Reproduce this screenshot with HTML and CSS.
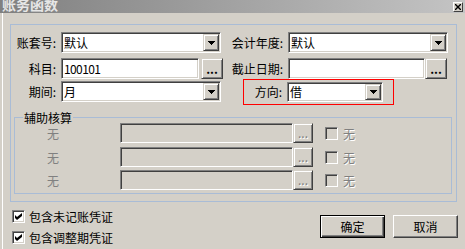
FILE: index.html
```html
<!DOCTYPE html>
<html lang="zh-CN">
<head>
    <meta charset="UTF-8">
    <title>账务函数</title>
    <link rel="stylesheet" href="styles.css">
</head>
<body>
    <div class="titlebar">
        <span class="title">账务函数</span>
        <span class="close">
            <svg width="6" height="6" viewBox="0 0 6 6"><path d="M0 0L6 6M6 0L0 6" stroke="#000" stroke-width="1.4"/></svg>
        </span>
    </div>
    <div class="main">
        <div class="frame">
            <div class="row">
                <label class="lbl">账套号:</label>
                <div class="cell">
                    <div class="combo sunken w160">
                        <span class="val">默认</span>
                        <span class="drop raised"><svg width="7" height="4" viewBox="0 0 7 4"><path d="M0 0h7v1h-1v1h-1v1h-1v1h-1v-1h-1v-1h-1v-1h-1z"/></svg></span>
                    </div>
                </div>
                <label class="lbl lbl-r">会计年度:</label>
                <div class="combo sunken w160">
                    <span class="val">默认</span>
                    <span class="drop raised"><svg width="7" height="4" viewBox="0 0 7 4"><path d="M0 0h7v1h-1v1h-1v1h-1v1h-1v-1h-1v-1h-1v-1h-1z"/></svg></span>
                </div>
            </div>
            <div class="row r2">
                <label class="lbl">科目:</label>
                <div class="cell">
                    <div class="field sunken w138"><span class="val num">100101</span></div>
                    <button class="dots raised gap">...</button>
                </div>
                <label class="lbl lbl-r">截止日期:</label>
                <div class="field sunken w137"></div>
                <button class="dots raised">...</button>
            </div>
            <div class="row r3">
                <label class="lbl">期间:</label>
                <div class="cell">
                    <div class="combo sunken w160">
                        <span class="val">月</span>
                        <span class="drop raised"><svg width="7" height="4" viewBox="0 0 7 4"><path d="M0 0h7v1h-1v1h-1v1h-1v1h-1v-1h-1v-1h-1v-1h-1z"/></svg></span>
                    </div>
                </div>
                <div class="dirbox">
                    <label class="lbl lbl-dir">方向:</label>
                    <div class="combo sunken w96 h20">
                        <span class="val">借</span>
                        <span class="drop raised"><svg width="7" height="4" viewBox="0 0 7 4"><path d="M0 0h7v1h-1v1h-1v1h-1v1h-1v-1h-1v-1h-1v-1h-1z"/></svg></span>
                    </div>
                </div>
            </div>

            <div class="group">
                <div class="group-title">辅助核算</div>
                <div class="grow">
                    <span class="glbl">无</span>
                    <div class="gfield sunken"></div>
                    <button class="gdots raised" disabled>...</button>
                    <span class="chk sunken off"></span>
                    <span class="gtext">无</span>
                </div>
                <div class="grow g2">
                    <span class="glbl">无</span>
                    <div class="gfield sunken"></div>
                    <button class="gdots raised" disabled>...</button>
                    <span class="chk sunken off"></span>
                    <span class="gtext">无</span>
                </div>
                <div class="grow g3">
                    <span class="glbl">无</span>
                    <div class="gfield sunken"></div>
                    <button class="gdots raised" disabled>...</button>
                    <span class="chk sunken off"></span>
                    <span class="gtext">无</span>
                </div>
            </div>
        </div>

        <div class="bottom">
            <div class="checks">
                <div class="chk-row">
                    <span class="chk sunken"><svg width="7" height="7" viewBox="0 0 7 7"><path d="M0 2l2 2 5-4v3l-5 4-2-2z"/></svg></span>
                    <span>包含未记账凭证</span>
                </div>
                <div class="chk-row c2">
                    <span class="chk sunken"><svg width="7" height="7" viewBox="0 0 7 7"><path d="M0 2l2 2 5-4v3l-5 4-2-2z"/></svg></span>
                    <span>包含调整期凭证</span>
                </div>
            </div>
            <div class="buttons">
                <button class="btn default">确定</button>
                <button class="btn">取消</button>
            </div>
        </div>
    </div>
</body>
</html>
```

FILE: styles.css
```css
* {
    box-sizing: border-box;
}
body {
    margin: 0;
    width: 465px;
    height: 249px;
    overflow: hidden;
    background: #d4d0c8;
    font-family: "Noto Sans CJK SC", sans-serif;
    font-size: 12px;
    color: #000;
}
button {
    font-family: inherit;
    font-size: 12px;
    padding: 0;
    color: #000;
}
.titlebar {
    height: 13px;
    display: flex;
    justify-content: space-between;
    background: linear-gradient(to right, #808080, #c4c4c4);
    overflow: hidden;
}
.title {
    font-size: 14px;
    font-weight: bold;
    line-height: 14px;
    color: #e6e6e6;
    margin: -3px 0 0 2px;
}
.close {
    width: 10px;
    height: 10px;
    margin: 2px 2px 0 0;
    background: #d4d0c8;
    border: 1px solid;
    border-color: #fff #404040 #404040 #fff;
    display: flex;
    align-items: center;
    justify-content: center;
}
.main {
    height: 236px;
    margin-left: 2px;
    border-left: 1px solid #fff;
    padding-top: 11px;
}
.frame {
    margin-left: 7px;
    width: 447px;
    height: 178px;
    border: 1px solid #a9bcd6;
    padding-top: 7px;
}

/* shared bevels */
.sunken {
    border: 1px solid;
    border-color: #808080 #fff #fff #808080;
    box-shadow: inset 1px 1px #404040, inset -1px -1px #d4d0c8;
    padding: 1px;
    background: #fff;
}
.raised {
    background: #d4d0c8;
    border: 1px solid;
    border-color: #d4d0c8 #404040 #404040 #d4d0c8;
    box-shadow: inset 1px 1px #fff, inset -1px -1px #808080;
}

/* top rows */
.row {
    display: flex;
    align-items: center;
    height: 21px;
}
.r2 {
    margin-top: 5px;
}
.r3 {
    margin-top: 2px;
}
.lbl {
    width: 50px;
    text-align: right;
    padding-right: 5px;
    white-space: nowrap;
}
.lbl-r {
    width: 65px;
}
.cell {
    width: 162px;
    display: flex;
    align-items: center;
}
.combo {
    display: flex;
    height: 21px;
}
.w160 {
    width: 160px;
}
.w96 {
    width: 96px;
}
.h20 {
    height: 20px;
}
.val {
    flex: 1;
    padding-left: 1px;
    line-height: 17px;
    white-space: nowrap;
}
.h20 .val {
    line-height: 16px;
}
.num {
    letter-spacing: -0.6px;
}
.drop {
    width: 16px;
    height: 100%;
    display: flex;
    align-items: center;
    justify-content: center;
}
.field {
    height: 21px;
    display: flex;
}
.w138 {
    width: 138px;
}
.w137 {
    width: 137px;
}
.dots {
    width: 22px;
    height: 21px;
    font-weight: bold;
    line-height: 15px;
}
.gap {
    margin-left: 2px;
}
.dirbox {
    margin-left: 20px;
    width: 151px;
    height: 26px;
    border: 1px solid #f00;
    display: flex;
    align-items: center;
}
.lbl-dir {
    width: 43px;
}

/* 辅助核算 */
.group {
    margin: 15px 0 0 3px;
    width: 438px;
    height: 77px;
    border: 1px solid #a9bcd6;
}
.group-title {
    width: fit-content;
    height: 13px;
    line-height: 13px;
    margin: -7px 0 -1px 8px;
    padding: 0 1px;
    background: #d4d0c8;
}
.grow {
    display: flex;
    align-items: center;
    height: 20px;
}
.g2 {
    margin-top: 4px;
}
.g3 {
    margin-top: 3px;
}
.glbl {
    width: 105px;
    padding-left: 32px;
    color: #808080;
}
.gfield {
    width: 173px;
    height: 20px;
    background: #d4d0c8;
}
.gdots {
    width: 20px;
    height: 20px;
    line-height: 14px;
    color: #808080;
    text-shadow: 1px 1px #fff;
}
.chk {
    width: 13px;
    height: 13px;
    display: flex;
    align-items: center;
    justify-content: center;
}
.off {
    margin-left: 12px;
    background: #d4d0c8;
}
.gtext {
    margin-left: 5px;
    color: #808080;
    text-shadow: 1px 1px #fff;
}

/* bottom */
.bottom {
    display: flex;
    margin-top: 8px;
}
.checks {
    margin-left: 9px;
}
.chk-row {
    display: flex;
    align-items: center;
    gap: 4px;
    height: 13px;
    white-space: nowrap;
}
.c2 {
    margin-top: 8px;
}
.buttons {
    margin: 5px 7px 0 auto;
    display: flex;
    gap: 8px;
}
.btn {
    width: 65px;
    height: 23px;
    background: #d4d0c8;
    border: 1px solid;
    border-color: #fff #404040 #404040 #fff;
    box-shadow: inset -1px -1px #808080;
}
.btn.default {
    border-color: #000;
    box-shadow: inset 1px 1px #fff, inset -1px -1px #404040, inset -2px -2px #808080;
}
```
